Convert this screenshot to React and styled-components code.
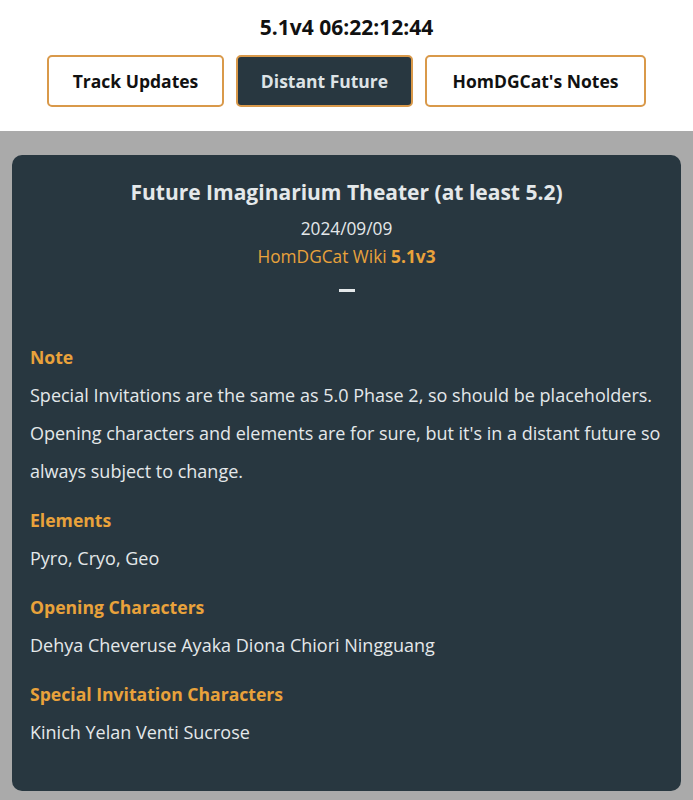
import styled, { createGlobalStyle } from "styled-components";

const GlobalStyle = createGlobalStyle`
  html, body {
    margin: 0;
    padding: 0;
    background: #aaaaaa;
    font-family: "Open Sans", "Noto Sans", "Liberation Sans", sans-serif;
  }
`;

const Header = styled.header`
  background: #fff;
  display: flex;
  flex-direction: column;
  align-items: center;
  padding: 14px 0 24px;
`;

const Clock = styled.div`
  font-size: 21px;
  font-weight: 700;
  color: #111;
  line-height: 26px;
`;

const Tabs = styled.nav`
  display: flex;
  gap: 12px;
  margin-top: 15px;
`;

const Tab = styled.button`
  font-family: inherit;
  font-size: 17.5px;
  font-weight: 700;
  height: 52px;
  padding: 0 18px;
  min-width: ${(p) => p.$w}px;
  border: 2px solid #d9994a;
  border-radius: 5px;
  background: ${(p) => (p.$active ? "#283740" : "#fff")};
  color: ${(p) => (p.$active ? "#dde3e6" : "#111")};
  cursor: pointer;
`;

const Main = styled.main`
  padding: 24px 12px 9px;
`;

const Card = styled.section`
  background: #283740;
  border-radius: 10px;
  padding: 24px 18px 40px;
  color: #e4e8ea;
`;

const Top = styled.div`
  display: flex;
  flex-direction: column;
  align-items: center;
  text-align: center;
`;

const Title = styled.h2`
  margin: 0;
  font-size: 21px;
  font-weight: 700;
  line-height: 26px;
  color: #e4e8ea;
`;

const Date = styled.div`
  margin-top: 14px;
  font-size: 17.3px;
  line-height: 20px;
`;

const Wiki = styled.div`
  margin-top: 8px;
  font-size: 17.3px;
  line-height: 20px;
  color: #e9a23b;

  b {
    font-weight: 700;
  }
`;

const Dash = styled.div`
  width: 16px;
  height: 3px;
  background: #e4e8ea;
  margin-top: 22px;
`;

const Section = styled.div`
  margin-top: ${(p) => (p.$first ? 54 : 19)}px;
`;

const Heading = styled.h3`
  margin: 0;
  font-size: 17.6px;
  font-weight: 700;
  line-height: 22px;
  color: #e9a23b;
`;

const Text = styled.p`
  margin: 8px 0 0;
  font-size: 18px;
  line-height: 38px;
  color: #e4e8ea;
`;

const sections = [
  {
    title: "Note",
    text: "Special Invitations are the same as 5.0 Phase 2, so should be placeholders. Opening characters and elements are for sure, but it's in a distant future so always subject to change.",
  },
  { title: "Elements", text: "Pyro, Cryo, Geo" },
  {
    title: "Opening Characters",
    text: "Dehya Cheveruse Ayaka Diona Chiori Ningguang",
  },
  { title: "Special Invitation Characters", text: "Kinich Yelan Venti Sucrose" },
];

export default function App() {
  return (
    <>
      <GlobalStyle />
      <Header>
        <Clock>5.1v4 06:22:12:44</Clock>
        <Tabs>
          <Tab $w={177}>Track Updates</Tab>
          <Tab $w={177} $active>
            Distant Future
          </Tab>
          <Tab $w={221}>HomDGCat's Notes</Tab>
        </Tabs>
      </Header>
      <Main>
        <Card>
          <Top>
            <Title>Future Imaginarium Theater (at least 5.2)</Title>
            <Date>2024/09/09</Date>
            <Wiki>
              HomDGCat Wiki <b>5.1v3</b>
            </Wiki>
            <Dash />
          </Top>
          {sections.map((s, i) => (
            <Section key={s.title} $first={i === 0}>
              <Heading>{s.title}</Heading>
              <Text>{s.text}</Text>
            </Section>
          ))}
        </Card>
      </Main>
    </>
  );
}
